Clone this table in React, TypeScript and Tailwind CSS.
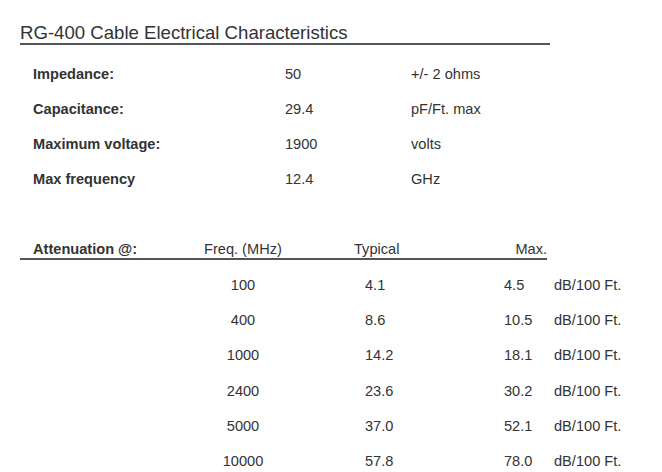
import React from "react";

const specs = [
  ["Impedance:", "50", "+/- 2 ohms"],
  ["Capacitance:", "29.4", "pF/Ft. max"],
  ["Maximum voltage:", "1900", "volts"],
  ["Max frequency", "12.4", "GHz"],
];

const atten = [
  ["100", "4.1", "4.5"],
  ["400", "8.6", "10.5"],
  ["1000", "14.2", "18.1"],
  ["2400", "23.6", "30.2"],
  ["5000", "37.0", "52.1"],
  ["10000", "57.8", "78.0"],
];

export default function App() {
  return (
    <div
      className="w-[662px] h-[472px] overflow-hidden bg-white text-[#333]"
      style={{ fontFamily: '"Liberation Sans", Arial, sans-serif' }}
    >
      <div className="pt-[23px] ml-[20px] w-[530px] border-b-2 border-[#555]">
        <div className="text-[18.6px] leading-[20px] whitespace-nowrap">
          RG-400 Cable Electrical Characteristics
        </div>
      </div>

      <div className="mt-[12px] ml-[33px] text-[14.6px] leading-[35px]">
        {specs.map(([l, v, u]) => (
          <div key={l} className="grid grid-cols-[252px_126px_1fr] h-[35px]">
            <div className="font-bold whitespace-nowrap">{l}</div>
            <div>{v}</div>
            <div className="whitespace-nowrap">{u}</div>
          </div>
        ))}
      </div>

      <div className="mt-[44px] ml-[20px] w-[527px] border-b-2 border-[#555] text-[14.6px] leading-[17px] flex">
        <div className="w-[184px] pl-[13px] font-bold whitespace-nowrap">Attenuation @:</div>
        <div className="w-[150px] whitespace-nowrap">Freq. (MHz)</div>
        <div className="w-[100px] whitespace-nowrap">Typical</div>
        <div className="flex-1 text-right whitespace-nowrap">Max.</div>
      </div>

      <div className="mt-[8px] ml-[20px] text-[14.6px] leading-[35.2px]">
        {atten.map(([f, t, m]) => (
          <div key={f} className="grid grid-cols-[183px_80px_82px_139px_50px_1fr] h-[35.2px]">
            <div />
            <div className="text-center">{f}</div>
            <div />
            <div>{t}</div>
            <div>{m}</div>
            <div className="whitespace-nowrap">dB/100 Ft.</div>
          </div>
        ))}
      </div>
    </div>
  );
}
